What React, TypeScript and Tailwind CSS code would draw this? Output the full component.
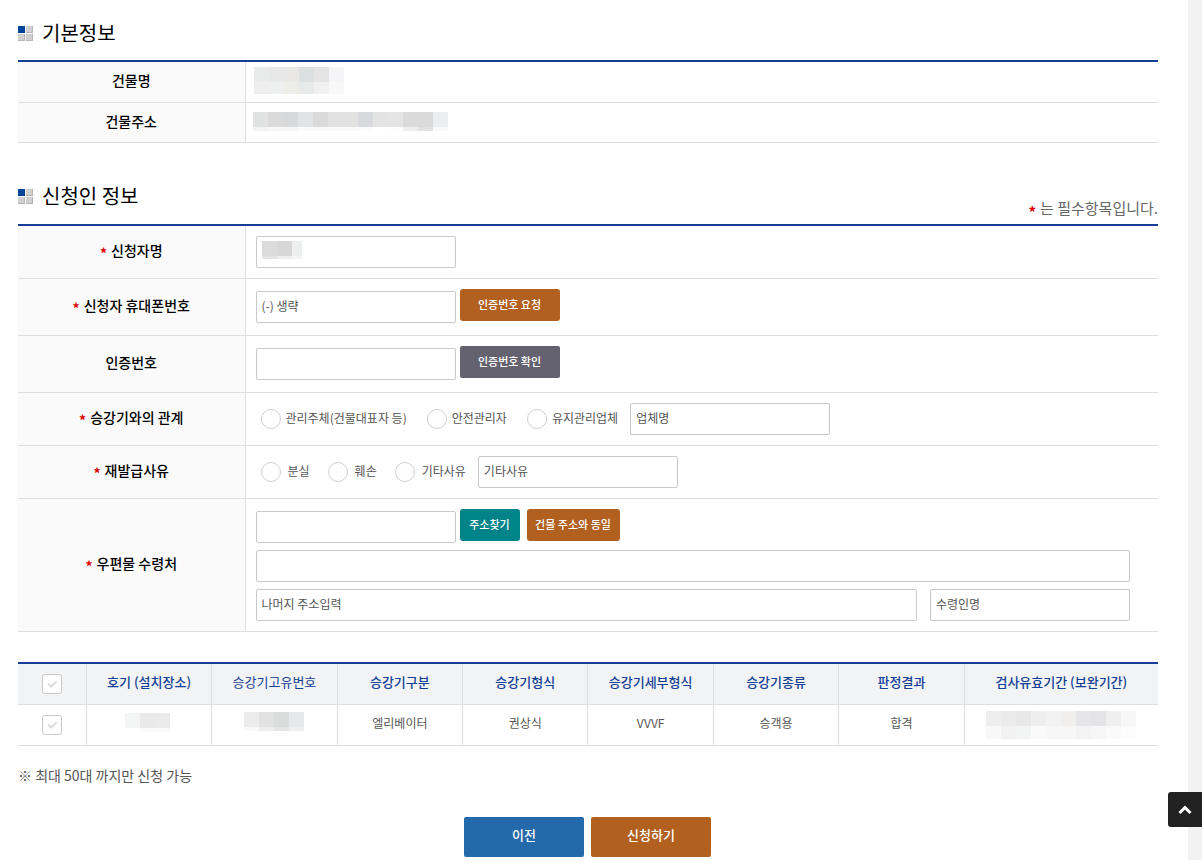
import { useState } from 'react'
import type { InputHTMLAttributes, ReactNode } from 'react'

const nameBlocks = [
  ['#e9ebeb', '#e8e8e8', '#e9e8e7', '#dce0e1', '#e4e4e5', '#f5f5f7'],
  ['#eeeeee', '#eef0ef', '#edeee9', '#e8eae9', '#f1f1f2', '#f8f8f8'],
]
const addressBlocks = [
  ['#e1e2e2', '#dadadb', '#d8d9db', '#e2e3e6', '#dadadb', '#e2e2e2', '#e2e2e2', '#d8d9dc', '#e3e3e3', '#e4e4e4', '#dadada', '#dadada', '#ecedf0'],
  ['#f3f3f3', '#f8f7f7', '#f6f6f6', '#fafafb', '#f8f8f8', '#fafafa', '#fafafa', '#fbfbfc', '#ffffff', '#fdfdfd', '#eeeeee', '#e0e2e1', '#fafafb'],
]
const applicantBlocks = [
  ['#dcdbdb', '#d7d7d7', '#edeeee'],
  ['#e4e4e4', '#eeedef', '#f6f6f6'],
]
const unitBlocks = [
  ['#f4f6f5', '#e9e9e9', '#eaeaea'],
  ['#ffffff', '#fafafa', '#fafafa'],
]
const serialBlocks = [
  ['#ececed', '#e1e1e2', '#dadcdb', '#e7e8ea'],
  ['#f9f9f9', '#eeeeee', '#e5e5e5', '#eeeef0'],
]
const periodBlocks = [
  ['#eeeeee', '#ebebec', '#e8e8e9', '#eeeeef', '#f2f2f2', '#f0efee', '#e6e6e8', '#e4e4e6', '#efeff0', '#f7f7f8'],
  ['#f8f8f8', '#f2f2f2', '#f3f5f4', '#fafafa', '#f7f7f7', '#f7f7f7', '#f3f3f4', '#f6f6f6', '#fafafa', '#fcfcfc'],
]

const headers = ['승강기구분', '승강기형식', '승강기세부형식', '승강기종류', '판정결과']
const values = ['엘리베이터', '권상식', 'VVVF', '승객용', '합격']

// masked personal data
function Mosaic({ rows, tail, className = '' }: { rows: string[][]; tail: string; className?: string }) {
  return (
    <span className={`inline-block align-top ${className}`} aria-hidden="true">
      {rows.map((row, i) => (
        <span key={i} className={`flex ${i === 0 ? 'h-[15px]' : tail}`}>
          {row.map((color, j) => (
            <span key={j} className="w-[15px] shrink-0" style={{ backgroundColor: color }} />
          ))}
        </span>
      ))}
    </span>
  )
}

function SectionTitle({ children }: { children: ReactNode }) {
  return (
    <h2 className="flex h-[34px] items-center gap-[9px] text-xl font-normal text-black">
      <svg width="15" height="15" viewBox="0 0 15 15" shapeRendering="crispEdges" aria-hidden="true">
        <path fill="#053b8b" d="M0 0h7v7H0z" />
        <path fill="#04469c" d="M0 0h6v6H0z" />
        <path fill="#b4b4b4" d="M8 0h7v7H8zM0 8h7v7H0zM8 8h7v7H8z" />
        <path fill="#d0d0d0" d="M8 0h6v6H8zM0 8h6v6H0zM8 8h6v6H8z" />
      </svg>
      {children}
    </h2>
  )
}

function Star() {
  return <span className="mr-1 align-sub leading-none font-bold text-[#dc0000]">*</span>
}

function Row({ label, required, htmlFor, children }: { label: string; required?: boolean; htmlFor?: string; children: ReactNode }) {
  return (
    <tr className="border-b border-[#dedede]">
      <th scope="row" className="w-[227px] border-r border-[#dedede] bg-[#fafafa] pb-1 text-sm font-medium text-black">
        {required && <Star />}
        {htmlFor ? <label htmlFor={htmlFor}>{label}</label> : label}
      </th>
      <td className="p-0 align-top">{children}</td>
    </tr>
  )
}

function TextBox({ className = 'w-[200px]', ...rest }: InputHTMLAttributes<HTMLInputElement>) {
  return (
    <input
      type="text"
      {...rest}
      className={`h-8 rounded-xs border border-[#c8c8c8] bg-white px-[5px] pb-[3px] text-xs text-[#555] outline-none placeholder:text-[#555] placeholder:opacity-100 focus:border-[#134094] ${className}`}
    />
  )
}

function Radio({ name, label, gap }: { name: string; label: string; gap: string }) {
  return (
    <label className={`flex items-center text-xs text-[#555] ${gap}`}>
      <input
        type="radio"
        name={name}
        className="size-5 appearance-none rounded-full border border-[#cfcfcf] bg-white checked:border-[6px] checked:border-[#134094]"
      />
      <span className="pb-[2px]">{label}</span>
    </label>
  )
}

function CheckBox({ label, checked, onChange }: { label: string; checked: boolean; onChange: () => void }) {
  return (
    <span className="relative inline-block size-5 align-top">
      <input
        type="checkbox"
        aria-label={label}
        checked={checked}
        onChange={onChange}
        className="block size-5 appearance-none rounded-[3px] border border-[#c8c8c8] bg-white checked:bg-[#134094]"
      />
      <svg className="pointer-events-none absolute inset-0" width="20" height="20" viewBox="0 0 20 20" fill="none" aria-hidden="true">
        <path d="M6 9.5l3 3 5.5-5" stroke="#dcdcdc" strokeWidth="2" />
      </svg>
    </span>
  )
}

export default function App() {
  const [selected, setSelected] = useState(false)
  const toggle = () => setSelected(!selected)

  return (
    <div className="flex min-h-screen bg-white font-['Noto_Sans_CJK_KR',sans-serif] text-[#555]">
      <main className="min-w-0 flex-1 pt-4 pr-[30px] pl-[18px]">
        <section>
          <div className="h-11">
            <SectionTitle>기본정보</SectionTitle>
          </div>
          <div className="border-t-2 border-[#134094]">
            <table className="w-full border-collapse">
              <tbody>
                <Row label="건물명">
                  <div className="h-10 pt-[5px] pl-2">
                    <Mosaic rows={nameBlocks} tail="h-3" />
                  </div>
                </Row>
                <Row label="건물주소">
                  <div className="h-[39px] pt-[9px] pl-[7px]">
                    <Mosaic rows={addressBlocks} tail="h-1" />
                  </div>
                </Row>
              </tbody>
            </table>
          </div>
        </section>

        <form onSubmit={(e) => e.preventDefault()}>
          <section className="mt-9">
            <div className="flex h-[45px] justify-between">
              <SectionTitle>신청인 정보</SectionTitle>
              <p className="self-end text-[15px] leading-8 text-[#666]">
                <Star />는 필수항목입니다.
              </p>
            </div>
            <div className="border-t-2 border-[#134094]">
              <table className="w-full border-collapse">
                <tbody>
                  <Row label="신청자명" required htmlFor="applicant">
                    <div className="relative flex p-[10px]">
                      <TextBox id="applicant" />
                      <Mosaic rows={applicantBlocks} tail="h-[3px]" className="pointer-events-none absolute top-[15px] left-4 w-10 overflow-hidden" />
                    </div>
                  </Row>
                  <Row label="신청자 휴대폰번호" required htmlFor="phone">
                    <div className="flex items-start gap-1 px-[10px] py-3">
                      <TextBox id="phone" placeholder="(-) 생략" />
                      <button type="button" className="-mt-0.5 h-8 w-[100px] rounded-[3px] bg-[#b1601f] pb-[2px] text-[11px] font-medium text-white">
                        인증번호 요청
                      </button>
                    </div>
                  </Row>
                  <Row label="인증번호" htmlFor="code">
                    <div className="flex items-start gap-1 px-[10px] py-3">
                      <TextBox id="code" />
                      <button type="button" className="-mt-0.5 h-8 w-[100px] rounded-xs bg-[#63626e] pb-[2px] text-[11px] font-medium text-white">
                        인증번호 확인
                      </button>
                    </div>
                  </Row>
                  <Row label="승강기와의 관계" required>
                    <div className="flex items-center py-[10px] pl-[15px]">
                      <div className="flex gap-5">
                        <Radio name="relation" label="관리주체(건물대표자 등)" gap="gap-[5px]" />
                        <Radio name="relation" label="안전관리자" gap="gap-[5px]" />
                        <Radio name="relation" label="유지관리업체" gap="gap-[5px]" />
                      </div>
                      <TextBox className="ml-3 w-[200px]" placeholder="업체명" aria-label="업체명" />
                    </div>
                  </Row>
                  <Row label="재발급사유" required>
                    <div className="flex items-center py-[10px] pl-[15px]">
                      <div className="flex gap-[18px]">
                        <Radio name="reason" label="분실" gap="gap-[7px]" />
                        <Radio name="reason" label="훼손" gap="gap-[7px]" />
                        <Radio name="reason" label="기타사유" gap="gap-[7px]" />
                      </div>
                      <TextBox className="ml-3 w-[200px]" placeholder="기타사유" aria-label="기타사유" />
                    </div>
                  </Row>
                  <Row label="우편물 수령처" required htmlFor="zip">
                    <div className="flex flex-col gap-[7px] pt-3 pr-7 pb-[10px] pl-[10px]">
                      <div className="flex items-start">
                        <TextBox id="zip" />
                        <button type="button" className="-mt-0.5 ml-1 h-8 w-[60px] rounded-[3px] bg-[#008489] pb-[2px] text-[11px] font-medium text-white">
                          주소찾기
                        </button>
                        <button type="button" className="-mt-0.5 ml-[7px] h-8 w-[93px] rounded-[3px] bg-[#b1601f] pb-[2px] text-[11px] font-medium text-white">
                          건물 주소와 동일
                        </button>
                      </div>
                      <TextBox className="w-full" aria-label="주소" />
                      <div className="flex gap-[13px]">
                        <TextBox className="min-w-0 flex-1" placeholder="나머지 주소입력" aria-label="나머지 주소입력" />
                        <TextBox placeholder="수령인명" aria-label="수령인명" />
                      </div>
                    </div>
                  </Row>
                </tbody>
              </table>
            </div>
          </section>

          <div className="mt-[30px] border-t-2 border-[#134094]">
            <table className="w-full table-fixed border-collapse text-center">
              <colgroup>
                <col className="w-[6%]" />
                <col className="w-[11%]" />
                <col className="w-[11%]" />
                <col className="w-[11%]" />
                <col className="w-[11%]" />
                <col className="w-[11%]" />
                <col className="w-[11%]" />
                <col className="w-[11%]" />
                <col className="w-[17%]" />
              </colgroup>
              <thead>
                <tr className="h-10 border-b border-[#dedede] bg-[#f2f3f5] text-[13px] text-[#134094] *:border-r *:border-[#dedede] *:pb-1 *:font-medium">
                  <th scope="col" className="pb-0!">
                    <CheckBox label="전체 선택" checked={selected} onChange={toggle} />
                  </th>
                  <th scope="col">호기 (설치장소)</th>
                  <th scope="col"><span className="font-normal">승강기고유번호</span></th>
                  {headers.map((h) => (
                    <th key={h} scope="col">{h}</th>
                  ))}
                  <th scope="col" className="border-r-0!">검사유효기간 (보완기간)</th>
                </tr>
              </thead>
              <tbody>
                <tr className="h-[41px] border-b border-[#dedede] text-xs *:border-r *:border-[#dedede]">
                  <td>
                    <CheckBox label="선택" checked={selected} onChange={toggle} />
                  </td>
                  <td className="pt-2 pr-1 align-top"><Mosaic rows={unitBlocks} tail="h-1" /></td>
                  <td className="pt-[7px] align-top"><Mosaic rows={serialBlocks} tail="h-1" /></td>
                  {values.map((v) => (
                    <td key={v} className="pb-1">{v}</td>
                  ))}
                  <td className="border-r-0! pt-[6px] align-top"><Mosaic rows={periodBlocks} tail="h-[13px]" /></td>
                </tr>
              </tbody>
            </table>
          </div>

          <p className="mt-[19px] text-sm leading-5">※ 최대 50대 까지만 신청 가능</p>

          <div className="mt-8 flex justify-center gap-[7px] pr-px pb-[3px]">
            <button type="button" className="h-10 w-[120px] rounded-xs bg-[#2469aa] pb-1 text-[13px] font-medium text-white">
              이전
            </button>
            <button type="submit" className="h-10 w-[120px] rounded-xs bg-[#b1601f] pb-1 text-[13px] font-medium text-white">
              신청하기
            </button>
          </div>
        </form>
      </main>

      <div className="w-[14px] shrink-0 bg-[#f2f2f2]" />

      <a href="#root" aria-label="맨 위로" className="fixed right-0 bottom-[33px] flex h-[35px] w-[34px] items-center justify-center rounded-l-[3px] bg-[#222]">
        <svg width="14" height="10" viewBox="0 0 14 10" fill="none" aria-hidden="true">
          <path d="M1.5 8L7 2.5 12.5 8" stroke="#fff" strokeWidth="3" />
        </svg>
      </a>
    </div>
  )
}
